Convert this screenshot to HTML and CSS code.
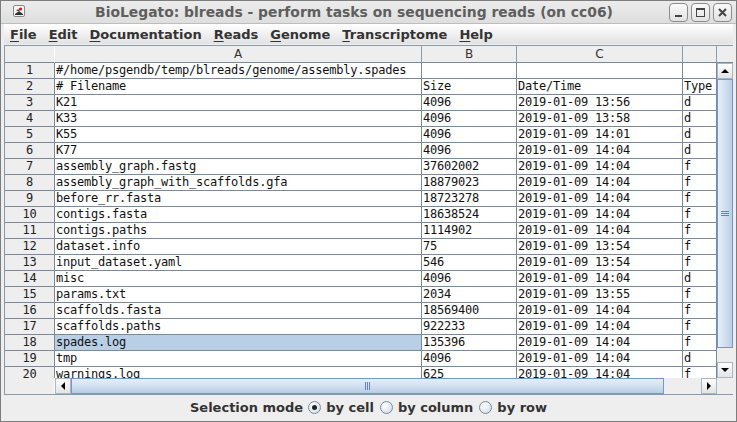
FILE: index.html
```html
<!DOCTYPE html>
<html>
<head>
<meta charset="utf-8">
<title>BioLegato</title>
<link rel="stylesheet" href="styles.css">
</head>
<body>
<div class="window">
  <div class="titlebar">
    <div class="appicon">
      <svg width="12" height="12" viewBox="0 0 12 12">
        <rect x="0.5" y="0.5" width="11" height="11" rx="1.5" fill="#f4f4f4" stroke="#8a8a8a"/>
        <path d="M2 9 L6 6 L10 9 L10 10 L2 10 Z" fill="#333"/>
        <path d="M3 6 L5 4 L7 6 Z" fill="#555"/>
        <circle cx="7.5" cy="4" r="1.6" fill="#d11"/>
      </svg>
    </div>
    <div class="title">BioLegato: blreads - perform tasks on sequencing reads (on cc06)</div>
    <div class="wbtns">
      <div class="wbtn"><svg width="17" height="17" viewBox="0 0 17 17"><rect x="5" y="11" width="7" height="2" fill="#444"/></svg></div>
      <div class="wbtn"><svg width="17" height="17" viewBox="0 0 17 17"><rect x="4.5" y="4.5" width="8" height="8" fill="none" stroke="#444" stroke-width="1"/><rect x="4.5" y="4.5" width="8" height="1.5" fill="#444"/></svg></div>
      <div class="wbtn"><svg width="17" height="17" viewBox="0 0 17 17"><path d="M5 5 L12 12 M12 5 L5 12" stroke="#444" stroke-width="2"/></svg></div>
    </div>
  </div>

  <div class="menubar">
    <span class="menu"><u>F</u>ile</span>
    <span class="menu"><u>E</u>dit</span>
    <span class="menu"><u>D</u>ocumentation</span>
    <span class="menu"><u>R</u>eads</span>
    <span class="menu"><u>G</u>enome</span>
    <span class="menu"><u>T</u>ranscriptome</span>
    <span class="menu"><u>H</u>elp</span>
  </div>

  <div class="content">
    <div class="scrollpane">
      <div class="corner-tl"></div>
      <div class="colheader">
        <div class="hc">A</div>
        <div class="hc">B</div>
        <div class="hc">C</div>
        <div class="hc"></div>
      </div>
      <div class="corner-tr"></div>

      <div class="rowheader">
        <div class="rh">1</div><div class="rh">2</div><div class="rh">3</div><div class="rh">4</div>
        <div class="rh">5</div><div class="rh">6</div><div class="rh">7</div><div class="rh">8</div>
        <div class="rh">9</div><div class="rh">10</div><div class="rh">11</div><div class="rh">12</div>
        <div class="rh">13</div><div class="rh">14</div><div class="rh">15</div><div class="rh">16</div>
        <div class="rh">17</div><div class="rh">18</div><div class="rh">19</div><div class="rh">20</div>
      </div>

      <div class="viewport">
        <div class="row"><div class="cell">#/home/psgendb/temp/blreads/genome/assembly.spades</div><div class="cell"></div><div class="cell"></div><div class="cell"></div></div>
        <div class="row"><div class="cell"># Filename</div><div class="cell">Size</div><div class="cell">Date/Time</div><div class="cell">Type</div></div>
        <div class="row"><div class="cell">K21</div><div class="cell">4096</div><div class="cell">2019-01-09 13:56</div><div class="cell">d</div></div>
        <div class="row"><div class="cell">K33</div><div class="cell">4096</div><div class="cell">2019-01-09 13:58</div><div class="cell">d</div></div>
        <div class="row"><div class="cell">K55</div><div class="cell">4096</div><div class="cell">2019-01-09 14:01</div><div class="cell">d</div></div>
        <div class="row"><div class="cell">K77</div><div class="cell">4096</div><div class="cell">2019-01-09 14:04</div><div class="cell">d</div></div>
        <div class="row"><div class="cell">assembly_graph.fastg</div><div class="cell">37602002</div><div class="cell">2019-01-09 14:04</div><div class="cell">f</div></div>
        <div class="row"><div class="cell">assembly_graph_with_scaffolds.gfa</div><div class="cell">18879023</div><div class="cell">2019-01-09 14:04</div><div class="cell">f</div></div>
        <div class="row"><div class="cell">before_rr.fasta</div><div class="cell">18723278</div><div class="cell">2019-01-09 14:04</div><div class="cell">f</div></div>
        <div class="row"><div class="cell">contigs.fasta</div><div class="cell">18638524</div><div class="cell">2019-01-09 14:04</div><div class="cell">f</div></div>
        <div class="row"><div class="cell">contigs.paths</div><div class="cell">1114902</div><div class="cell">2019-01-09 14:04</div><div class="cell">f</div></div>
        <div class="row"><div class="cell">dataset.info</div><div class="cell">75</div><div class="cell">2019-01-09 13:54</div><div class="cell">f</div></div>
        <div class="row"><div class="cell">input_dataset.yaml</div><div class="cell">546</div><div class="cell">2019-01-09 13:54</div><div class="cell">f</div></div>
        <div class="row"><div class="cell">misc</div><div class="cell">4096</div><div class="cell">2019-01-09 14:04</div><div class="cell">d</div></div>
        <div class="row"><div class="cell">params.txt</div><div class="cell">2034</div><div class="cell">2019-01-09 13:55</div><div class="cell">f</div></div>
        <div class="row"><div class="cell">scaffolds.fasta</div><div class="cell">18569400</div><div class="cell">2019-01-09 14:04</div><div class="cell">f</div></div>
        <div class="row"><div class="cell">scaffolds.paths</div><div class="cell">922233</div><div class="cell">2019-01-09 14:04</div><div class="cell">f</div></div>
        <div class="row"><div class="cell selected">spades.log</div><div class="cell">135396</div><div class="cell">2019-01-09 14:04</div><div class="cell">f</div></div>
        <div class="row"><div class="cell">tmp</div><div class="cell">4096</div><div class="cell">2019-01-09 14:04</div><div class="cell">d</div></div>
        <div class="row"><div class="cell">warnings.log</div><div class="cell">625</div><div class="cell">2019-01-09 14:04</div><div class="cell">f</div></div>
      </div>

      <div class="vscroll">
        <div class="sbtn"><svg width="14" height="14" viewBox="0 0 14 14"><path d="M3 9 L11 9 L7 5 Z" fill="#000"/></svg></div>
        <div class="vtrack"><div class="vthumb"><span class="grip-h"></span><span class="grip-h"></span><span class="grip-h"></span></div></div>
        <div class="sbtn"><svg width="14" height="14" viewBox="0 0 14 14"><path d="M3 5 L11 5 L7 9 Z" fill="#000"/></svg></div>
      </div>

      <div class="corner-bl"></div>
      <div class="hscroll">
        <div class="sbtn"><svg width="14" height="14" viewBox="0 0 14 14"><path d="M9 3 L9 11 L5 7 Z" fill="#000"/></svg></div>
        <div class="htrack"><div class="hthumb"><span class="grip-v"></span><span class="grip-v"></span><span class="grip-v"></span></div></div>
        <div class="sbtn"><svg width="14" height="14" viewBox="0 0 14 14"><path d="M5 3 L5 11 L9 7 Z" fill="#000"/></svg></div>
      </div>
      <div class="corner-br"></div>
    </div>
  </div>

  <div class="bottombar">
    <span class="blabel">Selection mode</span>
    <span class="radio checked"></span><span class="rlabel">by cell</span>
    <span class="radio"></span><span class="rlabel">by column</span>
    <span class="radio"></span><span class="rlabel">by row</span>
  </div>
</div>
</body>
</html>
```

FILE: styles.css
```css
* { box-sizing: border-box; }

html, body {
  margin: 0;
  padding: 0;
  background: #eeeeee;
}

.window {
  width: 737px;
  height: 422px;
  background: #eeeeee;
  border: 1px solid #7d7d7d;
  display: flex;
  flex-direction: column;
  font-family: "DejaVu Sans", sans-serif;
  overflow: hidden;
}

/* ---------- title bar ---------- */
.titlebar {
  height: 23px;
  flex: none;
  display: flex;
  align-items: center;
  background: linear-gradient(#ececec, #dedede);
  border-bottom: 1px solid #bdbdbd;
  padding-left: 12px;
  padding-right: 4px;
}

.appicon {
  width: 12px;
  height: 12px;
  display: flex;
  margin-top: -3px;
}

.title {
  flex: 1;
  text-align: center;
  font-weight: bold;
  font-size: 13.9px;
  color: #5e5e5e;
  padding-left: 14px;
  white-space: nowrap;
}

.wbtns {
  display: flex;
  gap: 3px;
}

.wbtn {
  width: 19px;
  height: 19px;
  border: 1px solid #8c8c8c;
  border-radius: 4px;
  background: linear-gradient(#fafafa, #e2e2e2);
  display: flex;
  align-items: center;
  justify-content: center;
}

/* ---------- menu bar ---------- */
.menubar {
  height: 20px;
  flex: none;
  margin: 0 3px 0 3px;
  display: flex;
  align-items: center;
  background: linear-gradient(#ffffff, #f3f3f3 40%, #e2e2e2);
  padding-left: 0;
}

.menu {
  font-weight: bold;
  font-size: 13px;
  color: #333333;
  padding: 0 6px;
  white-space: nowrap;
}

.menu u {
  text-decoration-thickness: 1px;
  text-underline-offset: 2px;
}

/* ---------- table ---------- */
.content {
  flex: none;
  padding: 1px 3px 0 3px;
}

.scrollpane {
  border: 1px solid #8b9aab;
  display: grid;
  grid-template-columns: 50px 662px 16px;
  grid-template-rows: 17px 315px 16px;
  background: #eeeeee;
}

.corner-tl {
  background: #eeeeee;
  border-right: 1px solid #ffffff;
  border-bottom: 1px solid #7a8a99;
}

.colheader {
  display: grid;
  grid-template-columns: 367px 95px 166px 34px;
  border-bottom: 1px solid #7a8a99;
  background: #eeeeee;
}

.hc {
  border-right: 1px solid #8d9cab;
  font-size: 12px;
  color: #333;
  text-align: center;
  line-height: 16px;
}

.corner-tr {
  background: #eeeeee;
  border-bottom: 1px solid #7a8a99;
}

.rowheader {
  border-right: 1px solid #7a8a99;
  overflow: hidden;
  background: #eeeeee;
}

.rh {
  height: 16px;
  border-bottom: 1px solid #7a8a99;
  font-family: "DejaVu Sans Mono", monospace;
  font-size: 12px;
  letter-spacing: -0.22px;
  line-height: 15px;
  text-align: center;
  color: #222;
}

.viewport {
  overflow: hidden;
  background: #ffffff;
}

.row {
  display: grid;
  grid-template-columns: 367px 95px 166px 34px;
  height: 16px;
}

.cell {
  border-right: 1px solid #7a8a99;
  border-bottom: 1px solid #7a8a99;
  font-family: "DejaVu Sans Mono", monospace;
  font-size: 12px;
  letter-spacing: -0.22px;
  line-height: 15px;
  padding-left: 1px;
  color: #111;
  white-space: nowrap;
  overflow: hidden;
}

.cell.selected {
  background: #b8cfe5;
}

/* ---------- scrollbars ---------- */
.vscroll {
  display: flex;
  flex-direction: column;
  background: #eeeeee;
}

.sbtn {
  width: 16px;
  height: 16px;
  flex: none;
  border: 1px solid #a9b6c3;
  background: linear-gradient(#ffffff, #e3e3e3);
  display: flex;
  align-items: center;
  justify-content: center;
}

.vtrack {
  flex: 1;
  padding: 0 0 14px 0;
  display: flex;
  flex-direction: column;
}

.vthumb {
  flex: 1;
  border: 1px solid #7497cf;
  background: linear-gradient(90deg, #e6eef8 0%, #d3e2f2 45%, #b9cde4 100%);
  display: flex;
  flex-direction: column;
  align-items: center;
  justify-content: center;
  gap: 1px;
}

.grip-h {
  width: 8px;
  height: 1px;
  background: #6382bf;
}

.hscroll {
  display: flex;
  background: #eeeeee;
}

.htrack {
  flex: 1;
  display: flex;
  padding-right: 37px;
}

.hthumb {
  flex: 1;
  border: 1px solid #7497cf;
  background: linear-gradient(#e6eef8 0%, #d3e2f2 45%, #b9cde4 100%);
  display: flex;
  align-items: center;
  justify-content: center;
  gap: 1px;
}

.grip-v {
  width: 1px;
  height: 8px;
  background: #6382bf;
}

.corner-bl {
  background: #eeeeee;
  border-right: 1px solid #ffffff;
}

.corner-br {
  background: #eeeeee;
}

/* ---------- bottom bar ---------- */
.bottombar {
  flex: 1;
  display: flex;
  align-items: center;
  justify-content: center;
  font-size: 13px;
  font-weight: bold;
  color: #333333;
  padding-bottom: 2px;
}

.blabel {
  margin-right: 5px;
}

.radio {
  width: 13px;
  height: 13px;
  border-radius: 50%;
  border: 1px solid #7a8a99;
  background: radial-gradient(circle at 35% 35%, #ffffff, #d9e3ee 70%, #b8c8d8);
  margin-right: 5px;
  margin-left: 6px;
  position: relative;
}

.radio.checked::after {
  content: "";
  position: absolute;
  left: 3px;
  top: 3px;
  width: 5px;
  height: 5px;
  border-radius: 50%;
  background: #222;
}

.blabel + .radio {
  margin-left: 0;
}
```
